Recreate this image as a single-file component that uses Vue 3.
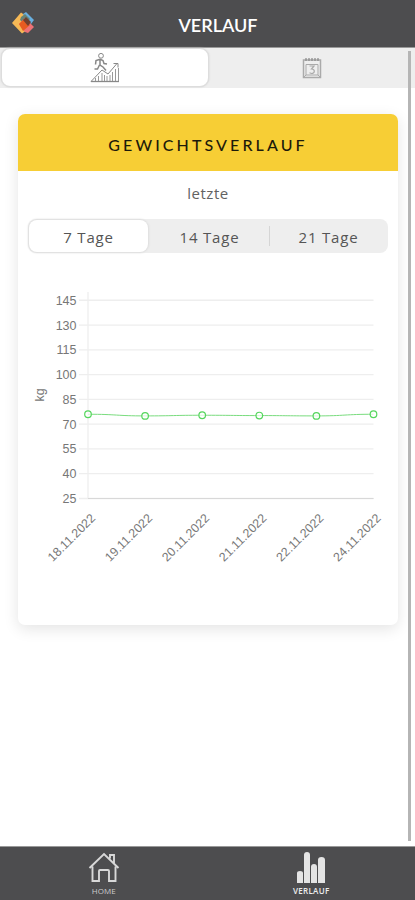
<script setup>
import { ref, computed } from 'vue';

const view = ref('chart');
const days = ref(7);
const ranges = [7, 14, 21];

const entries = [
  { date: '18.11.2022', kg: 76 },
  { date: '19.11.2022', kg: 75 },
  { date: '20.11.2022', kg: 75.4 },
  { date: '21.11.2022', kg: 75.2 },
  { date: '22.11.2022', kg: 75 },
  { date: '24.11.2022', kg: 76 },
];

const ticks = [145, 130, 115, 100, 85, 70, 55, 40, 25];

// plot area inside the svg
const left = 70;
const right = 355.5;
const bottom = 218.5;
const toY = (kg) => bottom - (kg - 25) * 1.652;

const points = computed(() =>
  entries.map((e, i) => ({
    ...e,
    x: left + (i * (right - left)) / (entries.length - 1),
    y: toY(e.kg),
  }))
);

const line = computed(() =>
  points.value
    .map((p, i, all) => {
      if (i === 0) return `M${p.x} ${p.y}`;
      const prev = all[i - 1];
      const mid = (prev.x + p.x) / 2;
      return `C${mid} ${prev.y} ${mid} ${p.y} ${p.x} ${p.y}`;
    })
    .join('')
);
</script>

<template>
  <div class="app">
    <header class="topbar">
      <svg class="logo" viewBox="0 0 24 24">
        <path d="M1 12 10 1.500l5 3.500-5 7 6 7-5 3.500Z" fill="#f6b956" />
        <path d="m12 3 3-2 8 8-3 4-7-8Z" fill="#68afe0" />
        <path d="m10 6 4-3 5 5-5 5-5-4Z" fill="#668477" />
        <path d="m8 13 6-6 9 9-6 6-3-1Z" fill="#ed7276" />
        <path d="m8 13 5-5 6 6-7 6Z" fill="#e75b20" />
        <path d="m12 9 3-3 5 5-3 4Z" fill="#70402e" />
      </svg>
      <h1 class="title">VERLAUF</h1>
    </header>

    <main class="content">
      <div class="views">
        <button class="view" :class="{ active: view === 'chart' }" @click="view = 'chart'">
          <svg class="runner" viewBox="0 0 30 30" fill="none" stroke="#888" stroke-width="1">
            <circle cx="11" cy="2.800" r="2.400" />
            <path d="M10 6.200 6 7.500l-.5 4M10 6.200l3 1.300 1 3 3 .5M10 7v5l3 2 3 3.500M9.500 12l-2 4h-3" stroke-width="1.500" />
            <path d="M1 28.500 12 17l6 4 9-10.500M23.500 10.500H28v4" />
            <path d="M1 28.500h28" stroke-width="1.300" />
            <path d="M5.500 28v-3M8.500 28v-5M12 28v-8M14.500 28v-6M17 28v-5M20 28v-6M22.500 28v-9M25.500 28V16M28.500 28V15" stroke="#999" />
          </svg>
        </button>
        <button class="view" :class="{ active: view === 'calendar' }" @click="view = 'calendar'">
          <svg class="calendar" viewBox="0 0 20 22" fill="none" stroke="#aaa">
            <path d="M1.500 3v17.500h17V3z" stroke-width="1.500" />
            <path d="M4 7.500h12V18H4z" />
            <path d="M1.500 20.500 4 18M18.500 20.500 16 18" />
            <path d="M4 1v3M7 1v3M10 1v3M13 1v3M16 1v3" stroke="#888" stroke-width="1.200" />
            <path d="M7.500 9H12l-2.500 3c4 0 3.500 4.500 0 4.500l-2-.8" stroke-width="1.200" />
          </svg>
        </button>
      </div>

      <section class="card">
        <h2 class="card-title">GEWICHTSVERLAUF</h2>
        <p class="label">letzte</p>
        <div class="segment">
          <button
            v-for="range in ranges"
            :key="range"
            class="segment-button"
            :class="{ active: days === range }"
            @click="days = range"
          >
            {{ range }} Tage
          </button>
        </div>

        <svg class="chart" width="380" height="320" viewBox="0 0 380 320">
          <g v-for="tick in ticks" :key="tick">
            <line class="grid" x1="61" :x2="right" :y1="toY(tick)" :y2="toY(tick)" />
            <text class="tick" x="58.500" :y="toY(tick) + 4.500" text-anchor="end">{{ tick }}</text>
          </g>
          <line class="grid" :x1="left" :x2="left" y1="12" :y2="bottom" />
          <line class="axis" :x1="left" :x2="right" :y1="bottom" :y2="bottom" />
          <text class="tick" transform="translate(26 115) rotate(-90)" text-anchor="middle">kg</text>
          <path class="line" :d="line" />
          <g v-for="point in points" :key="point.date">
            <circle class="point" :cx="point.x" :cy="point.y" r="3.300" />
            <text
              class="date"
              text-anchor="end"
              :transform="`translate(${point.x + 8} 239) rotate(-45)`"
            >{{ point.date }}</text>
          </g>
        </svg>
      </section>

      <div class="scrollbar"></div>
    </main>

    <nav class="tabbar">
      <a class="tab">
        <svg class="tab-icon" viewBox="0 0 32 32" fill="none" stroke="#d8d8d8" stroke-width="1.900">
          <path d="m1.500 16 14.500-14 14.500 14M4.500 14.500V29H11V19q0-1 1-1h8q1 0 1 1v10h6.500V14.500M22 6.500V3h4v8" />
        </svg>
        <span class="tab-label">HOME</span>
      </a>
      <a class="tab selected">
        <svg class="tab-icon" viewBox="0 0 32 32" fill="#e4e4e4">
          <path d="M2 31V21q0-2 3-2t3 2v10zM9 31V3q0-3 3-3t3 3v28zM16 31V15q0-3 3-3t3 3v16zM23 31V8q0-3 3.500-3T30 8v23z" />
        </svg>
        <span class="tab-label">VERLAUF</span>
      </a>
    </nav>
  </div>
</template>

<style>
body {
  background: #fff;
}
</style>

<style scoped>
.app {
  display: flex;
  flex-direction: column;
  height: 100vh;
  overflow: hidden;
  font-family: 'Open Sans', sans-serif;
}

.topbar {
  position: relative;
  display: flex;
  align-items: center;
  justify-content: center;
  flex: none;
  box-sizing: border-box;
  height: 48px;
  padding: 3px 0 0 21px;
  background: #4d4d4f;
  border-bottom: 1px solid #999;
}

.logo {
  position: absolute;
  left: 11px;
  top: 11px;
  width: 24px;
  height: 24px;
}

.title {
  margin: 0;
  font-family: Lato, sans-serif;
  font-size: 18px;
  font-weight: 600;
  color: #fff;
}

.content {
  position: relative;
  flex: 1;
  min-height: 0;
}

.views {
  display: flex;
  height: 40px;
  background: #eee;
}

.view {
  flex: 1;
  display: flex;
  align-items: center;
  justify-content: center;
  padding: 0;
  border: 0;
  border-radius: 9px;
  background: transparent;
}

.view.active {
  margin: 0 1px 1px 1px;
  border: 1px solid #ddd;
  background: #fff;
  box-shadow: 0 0 2px #ccc;
}

.runner {
  width: 30px;
  height: 30px;
}

.calendar {
  width: 20px;
  height: 22px;
}

.card {
  width: 380px;
  height: 511px;
  margin: 26px 0 0 18px;
  border-radius: 7px;
  overflow: hidden;
  background: #fff;
  box-shadow: 0 4px 15px rgba(0, 0, 0, 0.11);
}

.card-title {
  box-sizing: border-box;
  height: 57px;
  margin: 0;
  padding-top: 5px;
  background: #f7ce35;
  font-family: Lato, sans-serif;
  font-size: 16px;
  font-weight: 500;
  line-height: 51px;
  letter-spacing: 3.1px;
  text-align: center;
  color: #1d1a0a;
}

.label {
  margin: 11px 0 15px;
  font-size: 15px;
  line-height: 22px;
  letter-spacing: 0.5px;
  text-align: center;
  color: #626262;
}

.segment {
  display: flex;
  width: 360px;
  height: 34px;
  margin-left: 10px;
  border-radius: 8px;
  background: #eee;
}

.segment-button {
  position: relative;
  flex: 1;
  padding: 2px 0 0;
  border: 0;
  border-radius: 8px;
  background: transparent;
  font-family: inherit;
  font-size: 15px;
  letter-spacing: 0.8px;
  color: #555;
}

.segment-button.active {
  margin: 1px 2px 1px 1px;
  background: #fff;
  box-shadow: 0 0 2px 1px #ddd;
}

.segment-button:last-child::before {
  content: '';
  position: absolute;
  left: 0;
  top: 7px;
  width: 1px;
  height: 20px;
  background: #d5d5d5;
}

.chart {
  display: block;
  margin-top: 27px;
  font-family: 'Liberation Sans', sans-serif;
}

.grid {
  stroke: #eee;
  stroke-width: 1.3;
}

.axis {
  stroke: #d8d8d8;
}

.tick {
  font-size: 12.5px;
  fill: #777;
}

.date {
  font-size: 12.4px;
  fill: #777;
}

.line {
  fill: none;
  stroke: #79dc7e;
}

.point {
  fill: rgba(255, 255, 255, 0.7);
  stroke: #55d65d;
  stroke-width: 1.2;
}

.scrollbar {
  position: absolute;
  top: 3px;
  right: 4px;
  width: 3px;
  height: 790px;
  background: #b5b5b5;
}

.tabbar {
  display: flex;
  flex: none;
  box-sizing: border-box;
  height: 54px;
  background: #4d4d4f;
  border-top: 1px solid #999;
}

.tab {
  flex: 1;
  display: flex;
  flex-direction: column;
  align-items: center;
  padding-top: 5px;
  color: #ccc;
}

.tab.selected {
  color: #eee;
}

.tab-icon {
  width: 32px;
  height: 32px;
}

.tab-label {
  margin-top: 1px;
  font-size: 8px;
  line-height: 11px;
}

.selected .tab-label {
  font-weight: 600;
  letter-spacing: 0.3px;
}
</style>
